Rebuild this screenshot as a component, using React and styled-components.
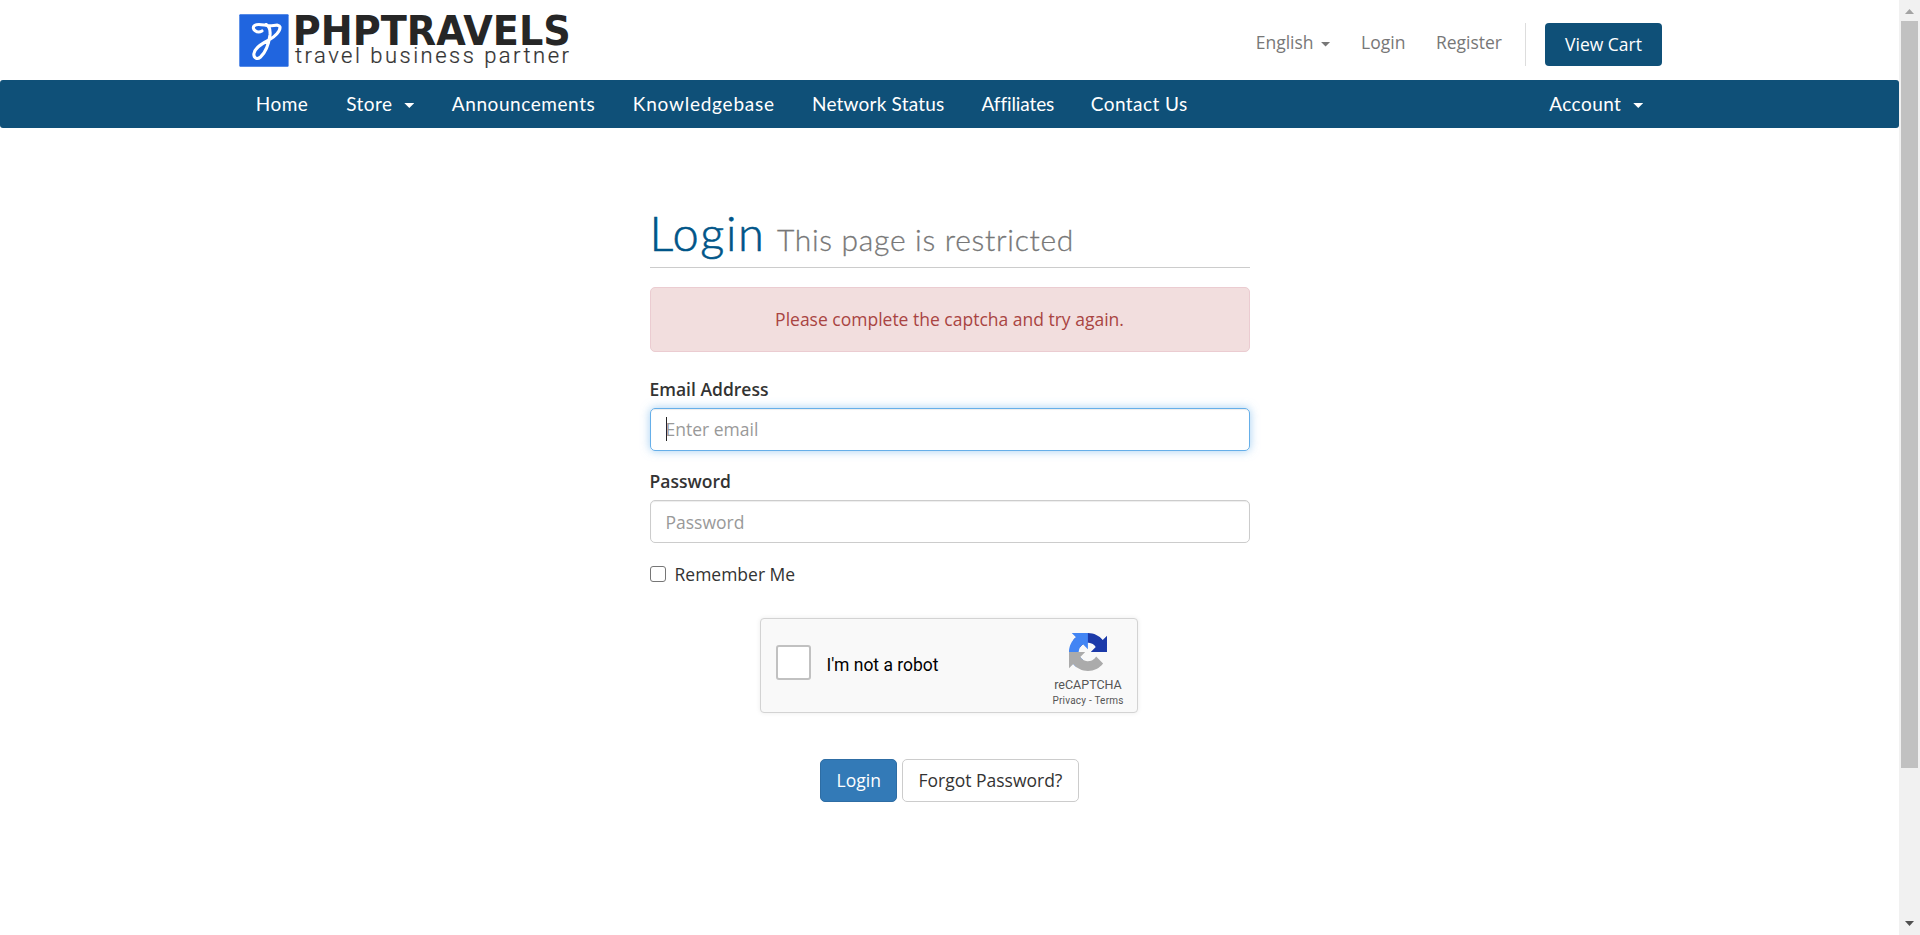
import React from "react";
import styled, { createGlobalStyle } from "styled-components";

const navy = "#0f5078";

const GlobalStyle = createGlobalStyle`
  *, *::before, *::after { box-sizing: border-box; }
  body {
    margin: 0;
    overflow: hidden;
    background: #fff;
    color: #333;
    font: 17.5px/25px "Open Sans", sans-serif;
  }
`;

const Window = styled.div`
  display: flex;
  height: 935px;
`;

const Page = styled.div`
  flex: 1;
  min-width: 0;
`;

const Container = styled.div`
  width: 1425px;
  margin: 0 auto;
  display: flex;
  justify-content: space-between;
`;

const TopBar = styled(Container)`
  height: 80px;
`;

const Logo = styled.svg`
  display: block;
  width: 400px;
  height: 80px;
`;

const TopMenu = styled.nav`
  display: flex;
  align-items: flex-start;
  padding-top: 23px;
`;

const TopLink = styled.a`
  display: flex;
  align-items: center;
  margin: 7px 30.5px 0 0;
  color: #777;
`;

const Caret = styled.span`
  width: 10px;
  height: 5px;
  margin-left: ${(p) => p.$gap}px;
  margin-top: ${(p) => p.$drop || 0}px;
  background: currentColor;
  clip-path: polygon(0 0, 100% 0, 50% 100%);
`;

const CartArea = styled.div`
  margin-left: -7.5px;
  padding-left: 19px;
  border-left: 1px solid #ddd;
`;

const CartButton = styled.button`
  display: block;
  width: 117px;
  height: 43px;
  padding: 0 0 1px;
  border: 0;
  border-radius: 4px;
  background: ${navy};
  color: #fff;
  font: inherit;
`;

const NavBar = styled.div`
  height: 48px;
  background: ${navy};
  border-radius: 3px;
`;

const NavGroup = styled.nav`
  display: flex;
`;

const NavItem = styled.a`
  display: flex;
  align-items: center;
  height: 47px;
  padding: 0 18.75px;
  color: #fff;
`;

const NavLabel = styled.span`
  width: ${(p) => p.$width}px;
  font: 19px/25px Lato, sans-serif;
  letter-spacing: ${(p) => p.$track}px;
  white-space: nowrap;
`;

const LoginForm = styled.form`
  width: 600px;
  margin: 0 auto;
  padding-top: 80px;
`;

const Title = styled.h1`
  margin: 0 0 19px;
  height: 60px;
  border-bottom: 1px solid #ccc;
  color: #058;
  font: 300 47px/50px Lato, sans-serif;
  letter-spacing: 1.6px;
  white-space: nowrap;
  -webkit-text-stroke: 0.6px currentColor;
`;

const Subtitle = styled.small`
  margin-left: 11.5px;
  color: #777;
  font-size: 30px;
  letter-spacing: 0.7px;
  -webkit-text-stroke: 0.3px currentColor;
`;

const Alert = styled.div`
  height: 65px;
  margin-bottom: 25px;
  padding: 19px;
  border: 1px solid #ebccd1;
  border-radius: 5px;
  background: #f2dede;
  color: #a94442;
  text-align: center;
`;

const Label = styled.label`
  display: block;
  margin-bottom: 6px;
  font-weight: 600;
`;

const Field = styled.div`
  display: flex;
  align-items: center;
  height: 42.5px;
  margin-bottom: 18.75px;
  padding: 0 15px;
  border: 1px solid ${(p) => (p.$focused ? "#66afe9" : "#ccc")};
  border-radius: 5px;
  box-shadow: inset 0 1px 1px rgba(0, 0, 0, 0.075)
    ${(p) => (p.$focused ? ", 0 0 10px rgba(102, 175, 233, 0.6)" : "")};
`;

const TextCursor = styled.span`
  width: 1px;
  height: 24px;
  margin-right: -1px;
  background: #222;
`;

const Input = styled.input`
  flex: 1;
  border: 0;
  padding: 1px 0 0;
  outline: 0;
  background: none;
  font: inherit;
  &::placeholder { color: #999; }
`;

const Remember = styled.label`
  display: flex;
  align-items: center;
  gap: 9px;
`;

const RememberBox = styled.span`
  width: 16px;
  height: 16px;
  border: 1px solid #767676;
  border-radius: 3px;
`;

const Captcha = styled.div`
  display: flex;
  align-items: center;
  width: 378px;
  height: 95px;
  margin: 31.5px auto 46px 110px;
  padding: 0 11px 0 15px;
  border: 1px solid #d3d3d3;
  border-radius: 4px;
  background: #f9f9f9;
  box-shadow: 0 0 5px rgba(0, 0, 0, 0.08);
  font-family: Roboto, sans-serif;
`;

const CaptchaBox = styled.span`
  width: 35px;
  height: 35px;
  margin: 0 16px 6px 0;
  border: 2px solid #c1c1c1;
  border-radius: 3px;
  background: #fff;
`;

const CaptchaText = styled.span`
  flex: 1;
  color: #000;
  letter-spacing: -0.02px;
`;

const CaptchaBrand = styled.div`
  display: flex;
  flex-direction: column;
  align-items: center;
  width: 75px;
  margin-top: 10px;
  color: #555;
`;

const CaptchaLogo = styled.svg`
  width: 38px;
  height: 38px;
  margin-bottom: 5px;
`;

const BrandName = styled.span`
  font-size: 12.5px;
  line-height: 18px;
`;

const BrandLinks = styled.span`
  font-size: 10px;
  line-height: 14px;
  letter-spacing: 0.22px;
`;

const Actions = styled.div`
  display: flex;
  justify-content: center;
  gap: 5px;
`;

const Button = styled.button`
  height: 43px;
  padding: 0 15.3px;
  border: 1px solid ${(p) => (p.$primary ? "#2e6da4" : "#ccc")};
  border-radius: 5px;
  background: ${(p) => (p.$primary ? "#337ab7" : "#fff")};
  color: ${(p) => (p.$primary ? "#fff" : "#333")};
  font: inherit;
`;

const Scrollbar = styled.div`
  display: flex;
  flex-direction: column;
  align-items: center;
  width: 21px;
  padding-right: 2px;
  padding-left: 2px;
  background: #f1f1f1;
`;

const Arrow = styled.svg`
  width: 9px;
  height: 5px;
  margin: ${(p) => p.$margin};
`;

const Thumb = styled.div`
  width: 17px;
  height: 747px;
  margin-bottom: auto;
  background: #c1c1c1;
`;

const navLinks = [
  { text: "Home", width: 52.9, track: 0.5 },
  { text: "Store", width: 48.2, track: 0.5, menu: true },
  { text: "Announcements", width: 143.5, track: 0.57 },
  { text: "Knowledgebase", width: 141.7, track: 0.77 },
  { text: "Network Status", width: 132, track: 0.2 },
  { text: "Affiliates", width: 71.7, track: -0.1 },
  { text: "Contact Us", width: 97, track: 0.45 },
];

function NavLink({ text, width, track, menu }) {
  return (
    <NavItem>
      <NavLabel $width={width} $track={track}>{text}</NavLabel>
      {menu && <Caret $gap={10} $drop={4} />}
    </NavItem>
  );
}

function BrandLogo() {
  return (
    <Logo viewBox="0 0 400 80">
      <rect x="2.300" y="14.300" width="49.300" height="52.500" rx="1" fill="#2065df" />
      <path
        d="M25 31 C20 34 14.500 29 17 26 C20 22.500 27 25.500 32 25.800 C37 26 42 23.500 43 27 C43.500 31 38 36.500 32 40 C24 44 17 49 16.800 54 C16.800 58 20 60 23.500 57 C29 52 32 42 33 35 C33.500 30 32 26 29 24.500"
        fill="none" stroke="#fff" strokeWidth="3.100" strokeLinecap="round" strokeLinejoin="round"
      />
      <text x="55.800" y="44.500" textLength="278" lengthAdjust="spacingAndGlyphs"
        fontFamily="DejaVu Sans, sans-serif" fontWeight="700" fontSize="40.500" fill="#262626">PHPTRAVELS</text>
      <text x="58" y="63" textLength="274" lengthAdjust="spacing"
        fontFamily="Roboto, sans-serif" fontWeight="300" fontSize="22" fill="#333" stroke="#333" strokeWidth="0.2">travel business partner</text>
    </Logo>
  );
}

export default function App() {
  return (
    <Window>
      <GlobalStyle />
      <Page>
        <TopBar>
          <BrandLogo />
          <TopMenu>
            <TopLink>English<Caret $gap={7} $drop={3} /></TopLink>
            <TopLink>Login</TopLink>
            <TopLink>Register</TopLink>
            <CartArea><CartButton>View Cart</CartButton></CartArea>
          </TopMenu>
        </TopBar>
        <NavBar>
          <Container>
            <NavGroup>
              {navLinks.map((link) => <NavLink key={link.text} {...link} />)}
            </NavGroup>
            <NavGroup>
              <NavLink text="Account" width={74} track={0.43} menu />
            </NavGroup>
          </Container>
        </NavBar>
        <LoginForm>
          <Title>Login<Subtitle>This page is restricted</Subtitle></Title>
          <Alert>Please complete the captcha and try again.</Alert>
          <Label htmlFor="email">Email Address</Label>
          <Field $focused>
            <TextCursor />
            <Input id="email" type="email" placeholder="Enter email" />
          </Field>
          <Label htmlFor="password">Password</Label>
          <Field>
            <Input id="password" type="password" placeholder="Password" />
          </Field>
          <Remember><RememberBox />Remember Me</Remember>
          <Captcha>
            <CaptchaBox />
            <CaptchaText>I'm not a robot</CaptchaText>
            <CaptchaBrand>
              <CaptchaLogo viewBox="0 0 64 64">
                <path fill="#1c3aa9" d="M64 31.955l-.033-1.37V4.687l-7.16 7.16C50.948 4.674 42.033.093 32.05.093c-10.4 0-19.622 4.96-25.458 12.64l11.736 11.86a15.55 15.55 0 0 1 4.754-5.334c2.05-1.6 4.952-2.906 8.968-2.906.485 0 .86.057 1.135.163 4.976.393 9.288 3.14 11.828 7.124l-8.307 8.307L64 31.953" />
                <path fill="#4285f4" d="M31.862.094l-1.37.033H4.594l7.16 7.16C4.58 13.147 0 22.06 0 32.046c0 10.4 4.96 19.622 12.64 25.458L24.5 45.768a15.55 15.55 0 0 1-5.334-4.754c-1.6-2.05-2.906-4.952-2.906-8.968 0-.485.057-.86.163-1.135.393-4.976 3.14-9.288 7.124-11.828l8.307 8.307L31.86.095" />
                <path fill="#ababab" d="M.001 32.045l.033 1.37v25.898l7.16-7.16c5.86 7.173 14.774 11.754 24.76 11.754 10.4 0 19.622-4.96 25.458-12.64l-11.736-11.86a15.55 15.55 0 0 1-4.754 5.334c-2.05 1.6-4.952 2.906-8.968 2.906-.485 0-.86-.057-1.135-.163-4.976-.393-9.288-3.14-11.828-7.124l8.307-8.307c-10.522.04-22.4.066-27.295-.005" />
              </CaptchaLogo>
              <BrandName>reCAPTCHA</BrandName>
              <BrandLinks>Privacy - Terms</BrandLinks>
            </CaptchaBrand>
          </Captcha>
          <Actions>
            <Button type="button" $primary>Login</Button>
            <Button type="button">Forgot Password?</Button>
          </Actions>
        </LoginForm>
      </Page>
      <Scrollbar>
        <Arrow viewBox="0 0 9 5" $margin="9px 0 7px"><path d="M0 5L4.500 0L9 5Z" fill="#a3a3a3" /></Arrow>
        <Thumb />
        <Arrow viewBox="0 0 9 5" $margin="0 0 9px"><path d="M0 0L4.500 5L9 0Z" fill="#505050" /></Arrow>
      </Scrollbar>
    </Window>
  );
}
